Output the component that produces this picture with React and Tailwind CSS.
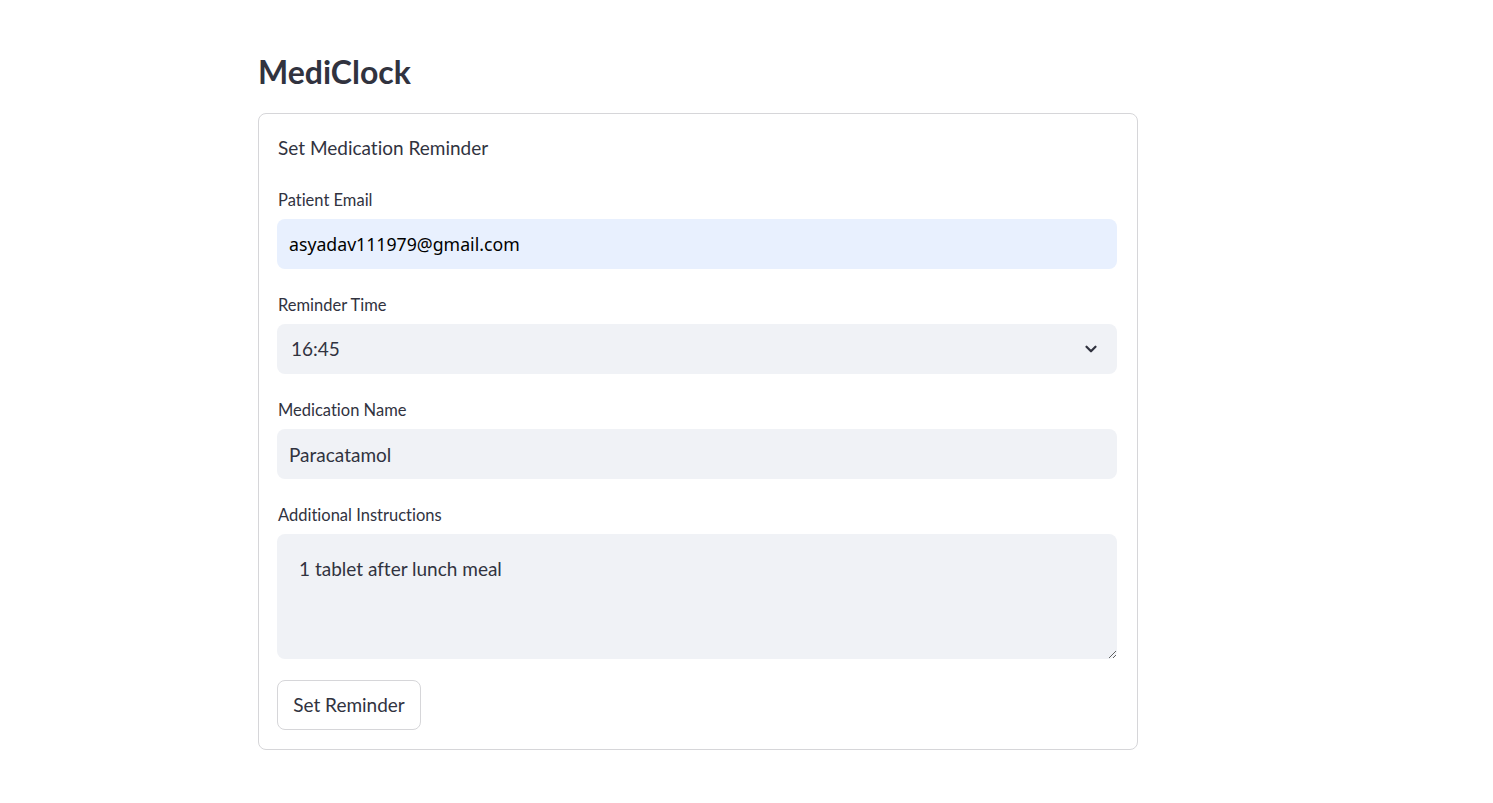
import React from "react";
import { ChevronDown } from "lucide-react";

const font = { fontFamily: "Lato, 'Noto Sans', sans-serif", fontVariantLigatures: "none" };

const Label = ({ children }) => (
  <div className="text-[16.5px] leading-[20px] text-[#31333f] pt-px mb-[9px] pl-px">{children}</div>
);

export default function App() {
  return (
    <div className="min-h-screen bg-white pt-[49px] pl-[258px]" style={font}>
      <div className="w-[880px]">
        <h1 className="text-[32px] leading-[46px] font-bold text-[#31333f]">MediClock</h1>

        <form
          className="mt-[18px] border border-[#d6d6d9] rounded-lg pl-[18px] pr-[20px] pt-[20px] pb-[19px]"
          onSubmit={(e) => e.preventDefault()}
        >
          <div className="text-[19px] leading-[28px] text-[#31333f] pl-px">Set Medication Reminder</div>

          <div className="mt-[27px]">
            <Label>Patient Email</Label>
            <input
              type="email"
              defaultValue="asyadav111979@gmail.com"
              className="w-full h-[50px] rounded-lg bg-[#e8f0fe] px-[12px] text-[17.7px] text-black outline-none"
              style={{ fontFamily: "'Noto Sans', sans-serif" }}
            />
          </div>

          <div className="mt-[25px]">
            <Label>Reminder Time</Label>
            <div className="w-full h-[50px] rounded-lg bg-[#f0f2f6] pl-[14px] pr-[17px] flex items-center justify-between">
              <span className="text-[19px] text-[#31333f]">16:45</span>
              <ChevronDown size={18} strokeWidth={3} className="text-[#31333f]" />
            </div>
          </div>

          <div className="mt-[25px]">
            <Label>Medication Name</Label>
            <input
              type="text"
              defaultValue="Paracatamol"
              className="w-full h-[50px] rounded-lg bg-[#f0f2f6] px-[12px] text-[19px] text-[#31333f] outline-none"
              style={font}
            />
          </div>

          <div className="mt-[25px]">
            <Label>Additional Instructions</Label>
            <textarea
              defaultValue="1 tablet after lunch meal"
              className="block w-full h-[125px] rounded-lg bg-[#f0f2f6] pl-[22px] pr-[12px] pt-[23px] text-[19px] leading-[24px] text-[#31333f] outline-none resize-y"
              style={font}
            />
          </div>

          <button
            type="submit"
            className="mt-[21px] h-[50px] w-[144px] rounded-lg border border-[#d6d6d9] bg-white text-[19px] text-[#31333f]"
          >
            Set Reminder
          </button>
        </form>
      </div>
    </div>
  );
}
